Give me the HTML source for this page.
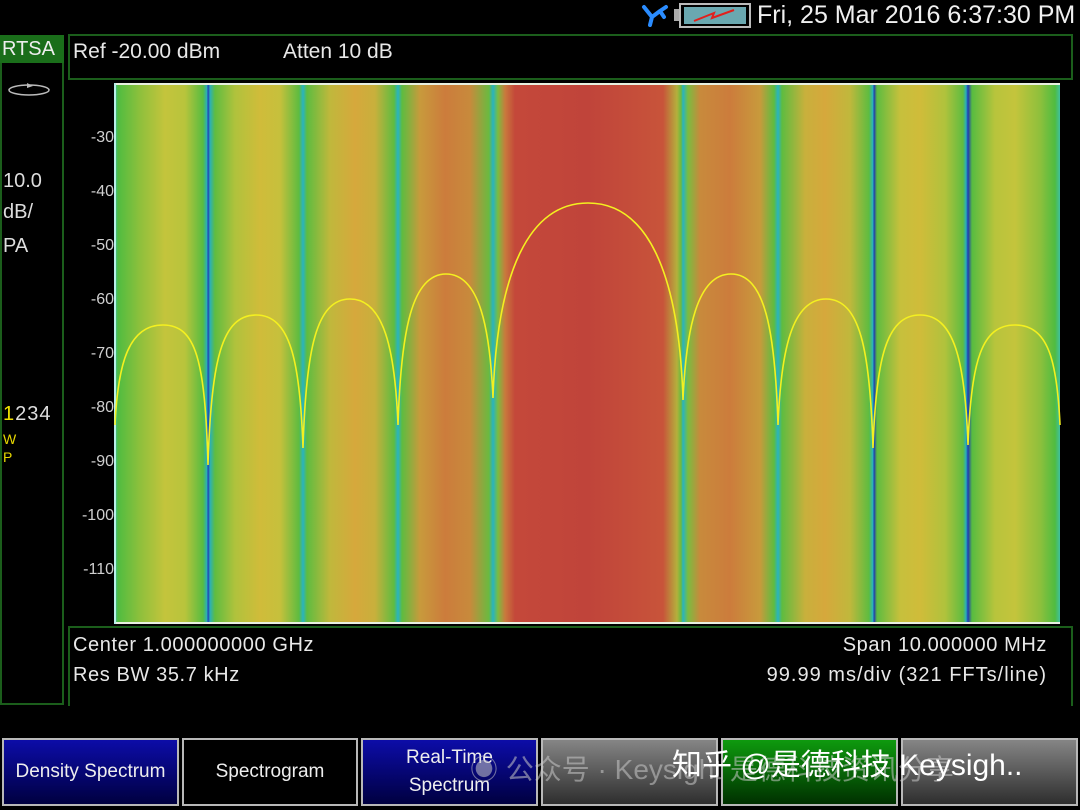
<!DOCTYPE html>
<html><head><meta charset="utf-8"><style>
body{margin:0;width:1080px;height:810px;background:#000;overflow:hidden;position:relative;font-family:"Liberation Sans","Noto Sans CJK SC",sans-serif;color:#e8e8e8}
.a{position:absolute}
.lbl{position:absolute;right:966px;font-size:16px;color:#cfcfcf;text-align:right}
.btn{position:absolute;top:738px;height:68px;width:172px;border:2px solid #b8b8b8;box-sizing:border-box;font-size:19px;color:#eee;display:flex;align-items:center;justify-content:center;text-align:center;line-height:28px}
.blue{background:linear-gradient(#0c0ca8,#000040)}
.gray{background:linear-gradient(#858585,#2e2e2e)}
.green{background:linear-gradient(#0e9a0e,#003000)}
.info{position:absolute;font-size:20px;letter-spacing:0.6px}
</style></head><body>
<!-- top status -->
<svg class="a" style="left:640px;top:3px" width="30" height="26"><path d="M4 4 L12 14 L20 8 M12 14 L10 22 M20 8 L26 4 M20 8 L24 14" stroke="#2a8cff" stroke-width="4" fill="none" stroke-linecap="round"/></svg>
<div class="a" style="left:674px;top:9px;width:5px;height:12px;background:#aaa"></div>
<div class="a" style="left:679px;top:3px;width:72px;height:25px;border:2px solid #bbb;box-sizing:border-box;background:#000"></div>
<div class="a" style="left:684px;top:7px;width:62px;height:17px;background:#6aa8b0"></div>
<svg class="a" style="left:690px;top:8px" width="50" height="15"><path d="M4 13 L24 5 L22 10 L44 2" stroke="#e0201c" stroke-width="2" fill="none"/></svg>
<div class="a" style="left:757px;top:1px;font-size:25px;color:#f0f0f0;white-space:nowrap">Fri, 25 Mar 2016 6:37:30 PM</div>
<!-- header box -->
<div class="a" style="left:68px;top:34px;width:1005px;height:46px;border:2px solid #1b5e1b;box-sizing:border-box"></div>
<div class="a" style="left:73px;top:40px;font-size:21px">Ref -20.00 dBm</div>
<div class="a" style="left:283px;top:40px;font-size:21px">Atten 10 dB</div>
<!-- left panel -->
<div class="a" style="left:0;top:35px;width:64px;height:670px;border:2px solid #1b5e1b;box-sizing:border-box"></div>
<div class="a" style="left:0;top:35px;width:62px;height:28px;background:#1a6e1a;color:#eee;font-size:20px;line-height:28px;padding-left:2px">RTSA</div>
<svg class="a" style="left:6px;top:80px" width="46" height="18"><ellipse cx="23" cy="10" rx="20" ry="5" stroke="#bbb" fill="none" stroke-width="1.5"/><path d="M21 3 L27 6 L21 8Z" fill="#bbb"/></svg>
<div class="a" style="left:3px;top:166px;font-size:20px;line-height:31px;color:#ddd">10.0<br>dB/</div>
<div class="a" style="left:3px;top:235px;font-size:20px;color:#ddd">PA</div>
<div class="a" style="left:3px;top:403px;font-size:20px;color:#ddd;letter-spacing:1px"><span style="color:#f0e000">1</span>234</div>
<div class="a" style="left:3px;top:430px;font-size:14px;color:#e8d800;line-height:18px">W<br>P</div>
<!-- axis labels -->
<div class="lbl" style="top:129px">-30</div>
<div class="lbl" style="top:183px">-40</div>
<div class="lbl" style="top:237px">-50</div>
<div class="lbl" style="top:291px">-60</div>
<div class="lbl" style="top:345px">-70</div>
<div class="lbl" style="top:399px">-80</div>
<div class="lbl" style="top:453px">-90</div>
<div class="lbl" style="top:507px">-100</div>
<div class="lbl" style="top:561px">-110</div>
<!-- plot -->
<div class="a" style="left:115px;top:83px;width:945px;height:541px;background:linear-gradient(90deg,
#40c0a0 0px,#50bc40 3px,#8ec03c 25px,#c4c43c 50px,#b8c43c 70px,#58bc40 88px,#2ab0b8 92px,#203ab0 93px,#2ab0b8 95px,#60bc40 100px,#b0c23c 120px,#d0bc3a 145px,#c6c03c 165px,#5ebc40 184px,#28b4c0 188px,#5ebc40 192px,#c0b83c 215px,#d6a83c 240px,#c8b03c 260px,#5ebc40 279px,#28b4c0 283px,#5ebc40 287px,#c89a3c 305px,#cc7c3c 330px,#c88a3c 355px,#6aba40 374px,#28b4c0 378px,#7abc40 383px,#c87a3c 390px,#c4483a 400px,#c0443a 473px,#c8543a 548px,#b4b03c 562px,#6aba40 566px,#28b4c0 568px,#7abc40 573px,#c88a3c 585px,#cc7c3c 615px,#c89a3c 645px,#5ebc40 659px,#28b4c0 663px,#5ebc40 667px,#c8b03c 690px,#d6a83c 710px,#c0b83c 735px,#5ebc40 754px,#28b4c0 758px,#203ab0 759px,#5ebc40 762px,#c6c03c 785px,#d0bc3a 805px,#b0c23c 830px,#60bc40 848px,#2ab0b8 851px,#203ab0 853px,#58bc40 857px,#b8c43c 880px,#c4c43c 900px,#8ec03c 925px,#50bc40 940px,#40c0a0 945px)"></div>
<div class="a" style="left:115px;top:83px;width:945px;height:2px;background:#e8f0e0"></div>
<div class="a" style="left:115px;top:622px;width:945px;height:2px;background:#e8f0e0"></div>
<div class="a" style="left:114px;top:83px;width:2px;height:541px;background:#b8f0e8"></div>
<svg class="a" style="left:0;top:0" width="1080" height="810">
<path fill="none" stroke="#f4f020" stroke-width="1.6" d="
M115 425 C118 360 130 325 163 325 C196 325 205 360 208 465
C211 360 222 315 256 315 C290 315 300 360 303 448
C306 350 316 299 350 299 C384 299 395 350 398 425
C401 330 412 274 446 274 C480 274 490 330 493 398
C497 270 530 203 588 203 C646 203 679 270 683 400
C686 330 697 274 731 274 C765 274 775 330 778 425
C781 350 792 299 826 299 C860 299 870 350 873 448
C876 360 886 315 920 315 C954 315 965 360 968 445
C971 360 982 325 1015 325 C1048 325 1057 360 1060 425"/>
</svg>
<!-- bottom info -->
<div class="a" style="left:68px;top:626px;width:1005px;height:80px;border:2px solid #1b5e1b;border-bottom:none;box-sizing:border-box"></div>
<div class="info" style="left:73px;top:634px">Center 1.000000000 GHz</div>
<div class="info" style="left:73px;top:664px">Res BW 35.7 kHz</div>
<div class="info" style="right:33px;top:634px">Span 10.000000 MHz</div>
<div class="info" style="right:33px;top:664px;letter-spacing:1px">99.99 ms/div (321 FFTs/line)</div>
<!-- buttons -->
<div class="btn blue" style="left:2px;width:177px;font-size:19px">Density Spectrum</div>
<div class="btn" style="left:182px;width:176px;background:#000">Spectrogram</div>
<div class="btn blue" style="left:361px;width:177px">Real-Time<br>Spectrum</div>
<div class="btn gray" style="left:541px;width:177px"></div>
<div class="btn green" style="left:721px;width:177px"></div>
<div class="btn gray" style="left:901px;width:177px"></div>
<div class="a" style="left:470px;top:748px;font-size:28px;color:rgba(200,200,200,0.55);white-space:nowrap">◉ 公众号 · Keysight 是德科技资讯分享</div>
<div class="a" style="left:672px;top:740px;font-size:30px;color:#fff;white-space:nowrap">知乎 @是德科技 Keysigh..</div>
</body></html>
